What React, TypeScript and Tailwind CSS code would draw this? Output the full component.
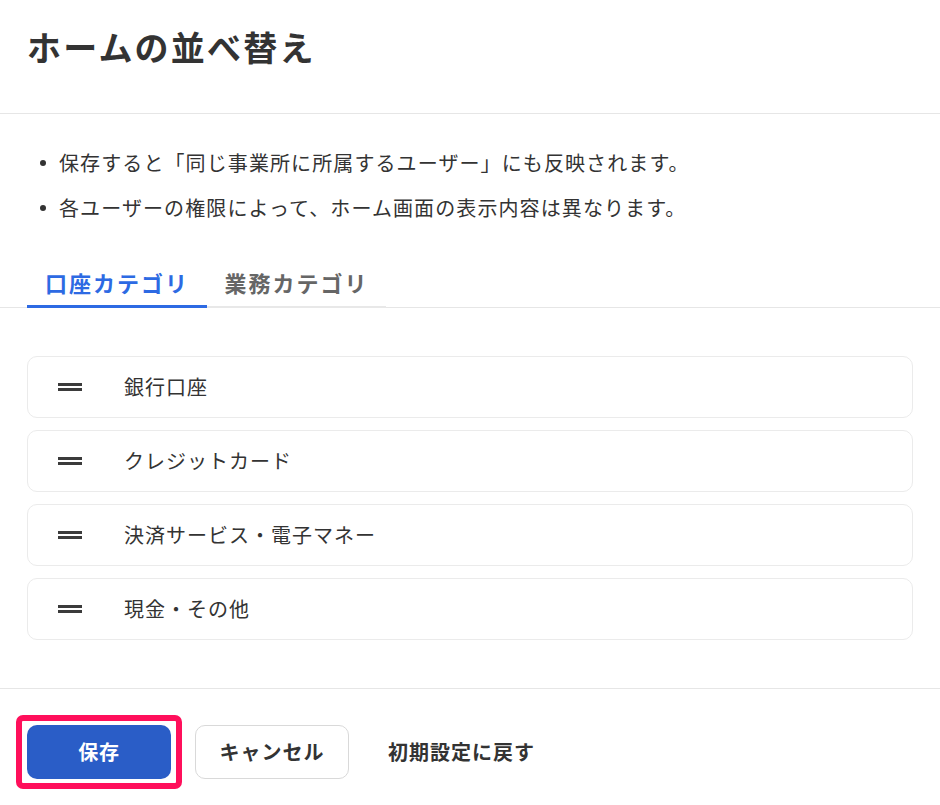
import * as React from "react"

const items = ["銀行口座", "クレジットカード", "決済サービス・電子マネー", "現金・その他"]

function DragHandle() {
  return (
    <div className="w-[24px] flex flex-col gap-[2px] shrink-0">
      <div className="h-[3px] bg-[#3b3b3b]" />
      <div className="h-[3px] bg-[#3b3b3b]" />
    </div>
  )
}

export default function App() {
  const [tab, setTab] = React.useState(0)

  return (
    <div className="w-[940px] h-[805px] bg-white text-[#333] font-['Noto_Sans_CJK_JP','Noto_Sans',sans-serif] overflow-hidden">
      {/* Header */}
      <div className="h-[114px] border-b border-[#e6e6e6] px-[27px] pt-[23px]">
        <h1 className="text-[34px] leading-[48px] font-bold tracking-[2.2px] text-[#333]">ホームの並べ替え</h1>
      </div>

      {/* Notes */}
      <ul className="pt-[33px] px-[40px] flex flex-col gap-[13px] text-[20px] leading-[32px] tracking-[1.1px]">
        <li className="flex items-center gap-[13px]">
          <span className="size-[6px] rounded-full bg-[#333] shrink-0" />
          保存すると「同じ事業所に所属するユーザー」にも反映されます。
        </li>
        <li className="flex items-center gap-[13px]">
          <span className="size-[6px] rounded-full bg-[#333] shrink-0" />
          各ユーザーの権限によって、ホーム画面の表示内容は異なります。
        </li>
      </ul>

      {/* Tabs */}
      <div className="mt-[43px] px-[27px] flex border-b border-[#e6e6e6]">
        {["口座カテゴリ", "業務カテゴリ"].map((label, i) => (
          <button
            key={label}
            type="button"
            onClick={() => setTab(i)}
            className={
              i === tab
                ? "-mb-px w-[180px] pt-0 pb-[8px] border-b-[3px] border-[#2d6ae3] text-[#2d6ae3] text-[22px] leading-[30px] font-bold tracking-[2px]"
                : "-mb-px w-[179px] pt-0 pb-[9px] border-b-[2px] border-[#e8e8e8] text-[#666] text-[22px] leading-[30px] font-bold tracking-[2px]"
            }
          >
            {label}
          </button>
        ))}
      </div>

      {/* Sortable list */}
      <div className="mt-[48px] px-[27px] flex flex-col gap-[12px]">
        {items.map((name) => (
          <div
            key={name}
            className="h-[62px] flex items-center gap-[42px] pl-[30px] rounded-[10px] border border-[#ebebeb] bg-white"
          >
            <DragHandle />
            <span className="text-[20px] tracking-[1px] text-[#333]">{name}</span>
          </div>
        ))}
      </div>

      {/* Footer */}
      <div className="mt-[48px] border-t border-[#e6e6e6] px-[27px] pt-[36px] flex items-center">
        <div className="relative">
          <button
            type="button"
            className="w-[144px] h-[54px] rounded-[10px] bg-[#2a5dc7] text-white text-[20px] font-bold tracking-[0.7px]"
          >
            保存
          </button>
          <span className="absolute -left-[11px] -top-[10px] w-[166px] h-[74px] border-[6px] border-[#ff0f5b] rounded-[7px] pointer-events-none" />
        </div>
        <button
          type="button"
          className="ml-[24px] w-[154px] h-[54px] rounded-[10px] border border-[#d9d9d9] bg-white text-[#333] text-[20px] font-bold tracking-[1px]"
        >
          キャンセル
        </button>
        <button
          type="button"
          className="ml-[20px] h-[54px] px-[19px] text-[#333] text-[20px] font-bold tracking-[1px]"
        >
          初期設定に戻す
        </button>
      </div>
    </div>
  )
}
